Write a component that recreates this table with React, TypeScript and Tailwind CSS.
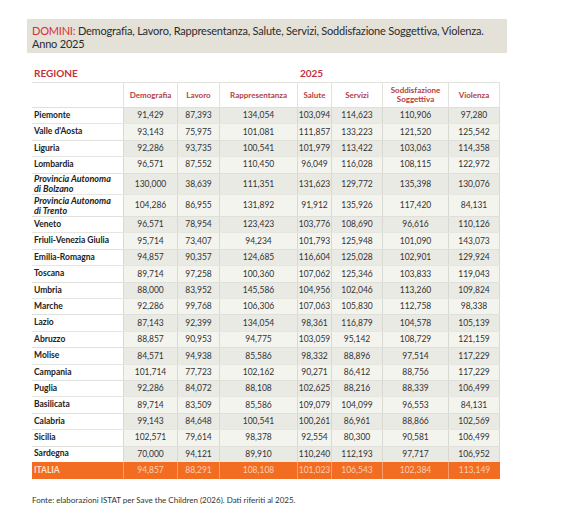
import React from "react";

type Row = {
  name: React.ReactNode;
  key: string;
  values: string[];
  italic?: boolean;
};

const rows: Row[] = [
  { key: "pie", name: "Piemonte", values: ["91,429", "87,393", "134,054", "103,094", "114,623", "110,906", "97,280"] },
  { key: "vda", name: "Valle d'Aosta", values: ["93,143", "75,975", "101,081", "111,857", "133,223", "121,520", "125,542"] },
  { key: "lig", name: "Liguria", values: ["92,286", "93,735", "100,541", "101,979", "113,422", "103,063", "114,358"] },
  { key: "lom", name: "Lombardia", values: ["96,571", "87,552", "110,450", "96,049", "116,028", "108,115", "122,972"] },
  {
    key: "bz",
    name: (
      <>
        Provincia Autonoma
        <br />
        di Bolzano
      </>
    ),
    italic: true,
    values: ["130,000", "38,639", "111,351", "131,623", "129,772", "135,398", "130,076"],
  },
  {
    key: "tn",
    name: (
      <>
        Provincia Autonoma
        <br />
        di Trento
      </>
    ),
    italic: true,
    values: ["104,286", "86,955", "131,892", "91,912", "135,926", "117,420", "84,131"],
  },
  { key: "ven", name: "Veneto", values: ["96,571", "78,954", "123,423", "103,776", "108,690", "96,616", "110,126"] },
  { key: "fvg", name: "Friuli-Venezia Giulia", values: ["95,714", "73,407", "94,234", "101,793", "125,948", "101,090", "143,073"] },
  { key: "emr", name: "Emilia-Romagna", values: ["94,857", "90,357", "124,685", "116,604", "125,028", "102,901", "129,924"] },
  { key: "tos", name: "Toscana", values: ["89,714", "97,258", "100,360", "107,062", "125,346", "103,833", "119,043"] },
  { key: "umb", name: "Umbria", values: ["88,000", "83,952", "145,586", "104,956", "102,046", "113,260", "109,824"] },
  { key: "mar", name: "Marche", values: ["92,286", "99,768", "106,306", "107,063", "105,830", "112,758", "98,338"] },
  { key: "laz", name: "Lazio", values: ["87,143", "92,399", "134,054", "98,361", "116,879", "104,578", "105,139"] },
  { key: "abr", name: "Abruzzo", values: ["88,857", "90,953", "94,775", "103,059", "95,142", "108,729", "121,159"] },
  { key: "mol", name: "Molise", values: ["84,571", "94,938", "85,586", "98,332", "88,896", "97,514", "117,229"] },
  { key: "cam", name: "Campania", values: ["101,714", "77,723", "102,162", "90,271", "86,412", "88,756", "117,229"] },
  { key: "pug", name: "Puglia", values: ["92,286", "84,072", "88,108", "102,625", "88,216", "88,339", "106,499"] },
  { key: "bas", name: "Basilicata", values: ["89,714", "83,509", "85,586", "109,079", "104,099", "96,553", "84,131"] },
  { key: "cal", name: "Calabria", values: ["99,143", "84,648", "100,541", "100,261", "86,961", "88,866", "102,569"] },
  { key: "sic", name: "Sicilia", values: ["102,571", "79,614", "98,378", "92,554", "80,300", "90,581", "106,499"] },
  { key: "sar", name: "Sardegna", values: ["70,000", "94,121", "89,910", "110,240", "112,193", "97,717", "106,952"] },
];

const italia = ["94,857", "88,291", "108,108", "101,023", "106,543", "102,384", "113,149"];

const headers = [
  "Demografia",
  "Lavoro",
  "Rappresentanza",
  "Salute",
  "Servizi",
  "Soddisfazione Soggettiva",
  "Violenza",
];

const grid = "grid grid-cols-[91px_54px_42px_78px_34px_51px_66px_52px]";

const App: React.FC = () => {
  return (
    <div className="w-[577px] h-[530px] bg-white font-['Lato',sans-serif] pt-[19px]">
      <div className="ml-[27px] w-[480px] h-[34px] bg-[#e4e1d9] pl-[5px] pt-[5px] text-[11px] leading-[13px] tracking-[-0.2px] text-[#2b2b2b]">
        <div className="whitespace-nowrap">
          <span className="text-[#d3303c]">DOMINI:</span> Demografia, Lavoro, Rappresentanza, Salute, Servizi,
          Soddisfazione Soggettiva, Violenza.
        </div>
        <div>Anno 2025</div>
      </div>

      <div className="ml-[32px] w-[468px] mt-[11px]">
        <div className={`${grid} h-[18px] items-center text-[10px] font-bold text-[#c3323c]`}>
          <div className="pl-[2px]">REGIONE</div>
          <div className="col-span-7 text-center">2025</div>
        </div>

        <div className={`${grid} h-[25px] border-t border-[#e3e3de] bg-white text-[8px] font-bold leading-[9px] text-[#b5403f]`}>
          <div />
          {headers.map((h) => (
            <div
              key={h}
              className="flex items-center justify-center border-l border-[#e3e3de] px-[2px] text-center last:border-r"
            >
              {h}
            </div>
          ))}
        </div>

        {rows.map((r, i) => (
          <div
            key={r.key}
            className={`${grid} ${r.italic ? "h-[21.75px]" : "h-[16.4px]"} border-t ${
              i % 2 === 0 ? "border-[#e0e0db]" : "border-[#e6e6e1]"
            } text-[#333333]`}
          >
            <div
              className={`flex items-center pl-[2px] font-bold leading-[9.5px] text-[#222222] ${
                r.italic ? "italic text-[9px]" : "text-[8.5px]"
              }`}
            >
              <span>{r.name}</span>
            </div>
            {r.values.map((v, j) => (
              <div
                key={j}
                className={`flex items-center justify-center border-l border-[#d9d9d4] text-[8.5px] last:border-r ${
                  i % 2 === 0 ? "bg-[#eaeae5]" : "bg-[#f4f4ef]"
                }`}
              >
                {v}
              </div>
            ))}
          </div>
        ))}

        <div className={`${grid} h-[17px] bg-[#f26c22] text-[8.5px]`}>
          <div className="flex items-center pl-[2px] font-bold text-[#fde0cc]">ITALIA</div>
          {italia.map((v, j) => (
            <div
              key={j}
              className="flex items-center justify-center border-l border-[#f6a070] text-[#fcd0b4]"
            >
              {v}
            </div>
          ))}
        </div>
      </div>

      <p className="ml-[32px] mt-[15px] text-[8px] text-[#333333]">
        Fonte: elaborazioni ISTAT per Save the Children (2026). Dati riferiti al 2025.
      </p>
    </div>
  );
};

export default App;
